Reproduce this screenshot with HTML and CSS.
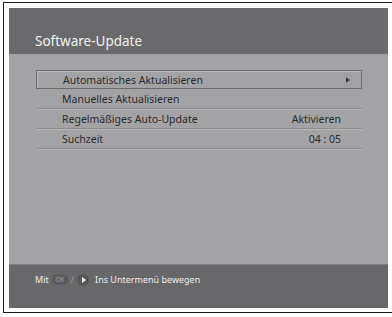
FILE: index.html
```html
<!DOCTYPE html>
<html lang="de">
<head>
    <meta charset="UTF-8">
    <title>Software-Update</title>
    <link rel="stylesheet" href="styles.css">
</head>
<body>

    <div class="frame">
        <div class="screen">
            <div class="header">
                <h2>Software-Update</h2>
            </div>
            <div class="menu">
                <div class="row selected">
                    <span>Automatisches Aktualisieren</span>
                    <span class="arrow"></span>
                </div>
                <div class="row">
                    <span>Manuelles Aktualisieren</span>
                </div>
                <div class="row">
                    <span>Regelmäßiges Auto-Update</span>
                    <span class="value">Aktivieren</span>
                </div>
                <div class="row">
                    <span>Suchzeit</span>
                    <span class="value">04 : 05</span>
                </div>
            </div>
            <div class="footer">
                <span>Mit</span>
                <span class="ok-btn">OK</span>
                <span class="slash">/</span>
                <span class="round-btn"></span>
                <span>Ins Untermenü bewegen</span>
            </div>
        </div>
    </div>

</body>
</html>
```

FILE: styles.css
```css
body {
    margin: 0;
    background-color: #fff;
    font-family: "Noto Sans", sans-serif;
}

.frame {
    width: 389px;
    height: 311px;
    margin: 2px 0 0 3px;
    border: 1px solid #1a1a1a;
    border-right: none;
    padding: 5px 0 0 5px;
    box-sizing: border-box;
}

.screen {
    width: 379px;
    height: 300px;
    display: flex;
    flex-direction: column;
    background-color: #a3a3a6;
}

.header {
    height: 46px;
    background-color: #6a6a6c;
    display: flex;
    align-items: flex-end;
    padding: 0 0 4px 26px;
    box-sizing: border-box;
}

h2 {
    margin: 0;
    font-size: 13.5px;
    font-weight: normal;
    color: #f2f2f2;
}

.menu {
    flex: 1;
    padding: 16px 26px 0 27px;
}

.row {
    height: 20px;
    display: flex;
    align-items: center;
    justify-content: space-between;
    padding: 0 21px 0 26px;
    box-sizing: border-box;
    font-size: 10.5px;
    color: #2b2b2d;
    border-bottom: 1px solid #8c8c8f;
    box-shadow: 0 1px 0 #b6b6b9;
}

.row.selected {
    height: 19px;
    border: 1px solid #6c6c6e;
    box-shadow: inset 1px 1px 0 #bcbcbf;
    padding-right: 11px;
}

.arrow {
    width: 0;
    height: 0;
    border-top: 3px solid transparent;
    border-bottom: 3px solid transparent;
    border-left: 4px solid #3a3a3c;
}

.footer {
    height: 44px;
    background-color: #68686a;
    border-top: 1px solid #7e7e80;
    box-sizing: border-box;
    display: flex;
    align-items: flex-start;
    gap: 3px;
    padding: 8px 0 0 26px;
    font-size: 9px;
    color: #ececec;
}

.ok-btn {
    width: 16px;
    height: 11px;
    border-radius: 6px;
    background-color: #5a5a5c;
    color: #9a9a9c;
    font-style: italic;
    font-size: 7px;
    line-height: 11px;
    text-align: center;
    margin-top: 1px;
}

.slash {
    color: #9a9a9c;
}

.round-btn {
    width: 12px;
    height: 12px;
    border-radius: 50%;
    background-color: #59595b;
    position: relative;
    margin: 1px 3px 0 0;
}

.round-btn::after {
    content: "";
    position: absolute;
    left: 5px;
    top: 3px;
    border-top: 3px solid transparent;
    border-bottom: 3px solid transparent;
    border-left: 4px solid #f0f0f0;
}
```
